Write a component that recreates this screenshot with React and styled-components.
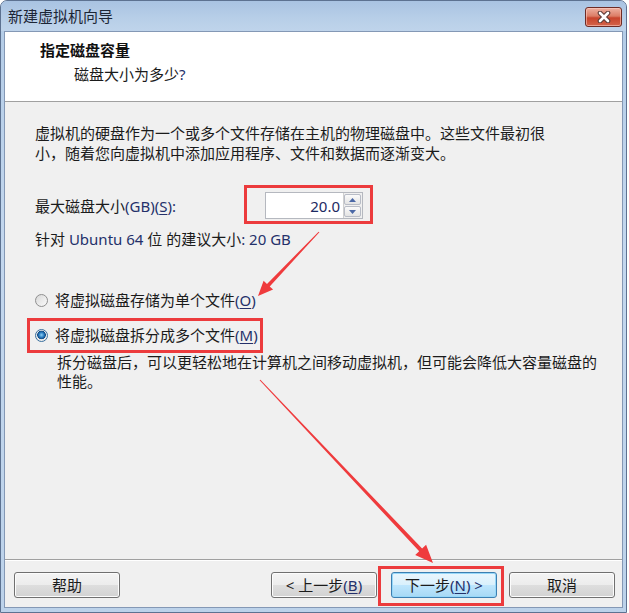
import React from 'react';
import styled, { createGlobalStyle } from 'styled-components';

const FONT = `"Noto Sans", "Noto Sans CJK SC", sans-serif`;

const Global = createGlobalStyle`
  html, body { margin: 0; padding: 0; background: #ffffff; }
  body { font-family: ${FONT}; }
`;

const Window = styled.div`
  position: relative;
  width: 627px;
  height: 613px;
  box-sizing: border-box;
  border: 1px solid #5d7291;
  border-radius: 7px 7px 0 0;
  background: linear-gradient(#b2cbe6, #c3d7ee 40%, #bcd2ea);
  display: flex;
  flex-direction: column;
  overflow: hidden;
  font-family: ${FONT};
`;

const TitleBar = styled.div`
  height: 30px;
  flex: none;
  display: flex;
  align-items: flex-start;
  padding: 0 4px 0 7px;
  background: linear-gradient(#a9c3e2, #b8cfe8 60%, #bfd4eb);
`;

const Title = styled.div`
  flex: 1;
  font-size: 15px;
  line-height: 30px;
  color: #1c2636;
`;

const CloseButton = styled.div`
  margin-top: 6px;
  width: 37px;
  height: 20px;
  box-sizing: border-box;
  border: 1px solid #6e2c26;
  border-radius: 3px;
  background: linear-gradient(#eeb0a0 0%, #dc7d66 45%, #c8442c 55%, #d4644a 100%);
  box-shadow: inset 0 0 0 1px rgba(255, 210, 200, 0.55);
  display: flex;
  align-items: center;
  justify-content: center;
`;

const Client = styled.div`
  flex: 1;
  margin: 0 3px 4px;
  border: 1px solid #8498b5;
  background: #f0f0f0;
  display: flex;
  flex-direction: column;
  min-height: 0;
`;

const Header = styled.div`
  height: 70px;
  flex: none;
  box-sizing: border-box;
  background: #ffffff;
  border-bottom: 1px solid #a0a0a0;
  padding: 8px 0 0 35px;
`;

const HeaderTitle = styled.div`
  font-size: 15px;
  line-height: 20px;
  font-weight: 700;
  color: #111;
`;

const HeaderSub = styled.div`
  margin: 4px 0 0 34px;
  font-size: 15px;
  line-height: 20px;
  color: #1b1b1b;
`;

const Body = styled.div`
  flex: 1;
  padding: 21px 20px 0 30px;
  display: flex;
  flex-direction: column;
  color: #1b1b1b;
  font-size: 15px;
  line-height: 20px;
`;

const Paragraph = styled.div`
  margin: 0;
`;

const Latin = styled.span`
  color: #24306a;
`;

const U = styled.span`
  text-decoration: underline;
  text-underline-offset: 2px;
`;

const SizeRow = styled.div`
  margin-top: 29px;
  display: flex;
  align-items: center;
`;

const SizeLabel = styled.div`
  width: 230px;
`;

const Highlight = styled.div`
  position: relative;
  display: inline-flex;
  align-self: ${(p) => p.$self || 'auto'};
  margin-left: ${(p) => p.$ml || 0}px;
  margin-top: ${(p) => p.$mt || 0}px;
  &::after {
    content: '';
    position: absolute;
    top: ${(p) => p.$t}px;
    right: ${(p) => p.$r}px;
    bottom: ${(p) => p.$b}px;
    left: ${(p) => p.$l}px;
    border: 3px solid #ec3b3d;
    pointer-events: none;
  }
`;

const Spin = styled.div`
  display: flex;
  width: 98px;
  height: 27px;
  box-sizing: border-box;
  border: 1px solid #b5b8bf;
  background: #ffffff;
`;

const SpinValue = styled.div`
  flex: 1;
  display: flex;
  align-items: center;
  justify-content: flex-end;
  padding-right: 3px;
  font-size: 15px;
  color: #1c2a62;
`;

const SpinButtons = styled.div`
  width: 19px;
  display: flex;
  flex-direction: column;
  gap: 1px;
  padding: 1px 1px 1px 0;
  box-sizing: border-box;
  background: #f0f0f0;
  border-left: 1px solid #d0d0d0;
`;

const SpinBtn = styled.div`
  flex: 1;
  border: 1px solid #b8bcc6;
  border-radius: 2px;
  background: linear-gradient(#fafafa, #e4e4e4);
  display: flex;
  align-items: center;
  justify-content: center;
`;

const Hint = styled.div`
  margin-top: 10px;
`;

const RadioRow = styled.div`
  display: flex;
  align-items: center;
  height: 20px;
  margin-top: ${(p) => p.$mt}px;
`;

const RadioCircle = styled.span`
  width: 13px;
  height: 13px;
  box-sizing: border-box;
  border-radius: 50%;
  border: 1px solid ${(p) => (p.$on ? '#3a6f9e' : '#8f8f8f')};
  background: ${(p) =>
    p.$on
      ? 'radial-gradient(circle at 50% 45%, #8fd0f5 0, #2a7cc0 2.5px, #114a85 4px, #e8e8e8 4.6px, #f6f6f6 100%)'
      : 'linear-gradient(135deg, #d8d8d8, #fbfbfb)'};
  margin-right: 7px;
  flex: none;
`;

const Description = styled.div`
  margin: 8px 0 0 22px;
  line-height: 19px;
`;

const Footer = styled.div`
  flex: none;
  height: 48px;
  box-sizing: border-box;
  border-top: 1px solid #a0a0a0;
  box-shadow: inset 0 1px 0 #ffffff;
  padding: 12px 7px 0 9px;
  display: flex;
  align-items: flex-start;
`;

const ButtonGroup = styled.div`
  margin-left: auto;
  display: flex;
  gap: 12px;
`;

const Button = styled.div`
  width: 106px;
  height: 26px;
  box-sizing: border-box;
  border: 1px solid ${(p) => (p.$default ? '#3c7fb1' : '#707070')};
  border-radius: 3px;
  background: ${(p) =>
    p.$default
      ? 'linear-gradient(#eaf6fd 0%, #d9f0fc 50%, #bee6fd 50%, #a7d9f5 100%)'
      : 'linear-gradient(#f4f4f4 0%, #ececec 50%, #dedede 50%, #d2d2d2 100%)'};
  box-shadow: inset 0 0 0 1px ${(p) => (p.$default ? '#97d8f9' : '#fcfcfc')};
  font-size: 15px;
  line-height: 24px;
  text-align: center;
  color: #1b1b1b;
`;

const Overlay = styled.svg`
  position: absolute;
  left: 0;
  top: 0;
  pointer-events: none;
`;

function arrow(tx, ty, px, py, L, W, w0, w1) {
  const dx = px - tx;
  const dy = py - ty;
  const len = Math.hypot(dx, dy);
  const ux = dx / len;
  const uy = dy / len;
  const nx = -uy;
  const ny = ux;
  const bx = px - ux * L;
  const by = py - uy * L;
  const pts = [
    [tx + nx * w0, ty + ny * w0],
    [bx + nx * w1, by + ny * w1],
    [bx + nx * W, by + ny * W],
    [px, py],
    [bx - nx * W, by - ny * W],
    [bx - nx * w1, by - ny * w1],
    [tx - nx * w0, ty - ny * w0],
  ];
  return pts.map((p) => p.map((v) => v.toFixed(1)).join(',')).join(' ');
}

const Up = () => (
  <svg width="7" height="4" viewBox="0 0 7 4">
    <path d="M0 4 L3.5 0 L7 4 Z" fill="#4b68a6" />
  </svg>
);
const Down = () => (
  <svg width="7" height="4" viewBox="0 0 7 4">
    <path d="M0 0 L3.5 4 L7 0 Z" fill="#4b68a6" />
  </svg>
);

export default function App() {
  return (
    <>
      <Global />
      <Window>
        <TitleBar>
          <Title>新建虚拟机向导</Title>
          <CloseButton>
            <svg width="14" height="12" viewBox="0 0 14 12">
              <path d="M3 2 L11 10 M11 2 L3 10" stroke="#5a3a36" strokeWidth="4.6" strokeLinecap="round" />
              <path d="M3 2 L11 10 M11 2 L3 10" stroke="#ffffff" strokeWidth="2.6" strokeLinecap="round" />
            </svg>
          </CloseButton>
        </TitleBar>
        <Client>
          <Header>
            <HeaderTitle>指定磁盘容量</HeaderTitle>
            <HeaderSub>
              磁盘大小为多少<Latin>?</Latin>
            </HeaderSub>
          </Header>
          <Body>
            <Paragraph>
              虚拟机的硬盘作为一个或多个文件存储在主机的物理磁盘中。这些文件最初很
              <br />
              小，随着您向虚拟机中添加应用程序、文件和数据而逐渐变大。
            </Paragraph>
            <SizeRow>
              <SizeLabel>
                最大磁盘大小<Latin>(GB)(<U>S</U>):</Latin>
              </SizeLabel>
              <Highlight $t={-7} $r={-10} $b={-5} $l={-21}>
                <Spin>
                  <SpinValue>20.0</SpinValue>
                  <SpinButtons>
                    <SpinBtn>
                      <Up />
                    </SpinBtn>
                    <SpinBtn>
                      <Down />
                    </SpinBtn>
                  </SpinButtons>
                </Spin>
              </Highlight>
            </SizeRow>
            <Hint>
              针对 <Latin>Ubuntu 64</Latin> 位 的建议大小<Latin>: 20 GB</Latin>
            </Hint>
            <RadioRow $mt={41}>
              <RadioCircle />
              将虚拟磁盘存储为单个文件<Latin>(<U>O</U>)</Latin>
            </RadioRow>
            <Highlight $self="flex-start" $mt={15} $t={-7} $r={-5} $b={-8} $l={-8}>
              <RadioRow $mt={0}>
                <RadioCircle $on />
                将虚拟磁盘拆分成多个文件<Latin>(<U>M</U>)</Latin>
              </RadioRow>
            </Highlight>
            <Description>
              拆分磁盘后，可以更轻松地在计算机之间移动虚拟机，但可能会降低大容量磁盘的
              <br />
              性能。
            </Description>
          </Body>
          <Footer>
            <Button>帮助</Button>
            <ButtonGroup>
              <Button>
                &lt; 上一步<Latin>(<U>B</U>)</Latin>
              </Button>
              <Highlight $ml={2} $t={-6} $r={-7} $b={-8} $l={-13}>
                <Button $default>
                  下一步<Latin>(<U>N</U>) &gt;</Latin>
                </Button>
              </Highlight>
              <Button>取消</Button>
            </ButtonGroup>
          </Footer>
        </Client>
        <Overlay width="627" height="613" viewBox="0 0 627 613">
          <polygon points={arrow(318, 231, 257, 295, 15, 6.5, 0.5, 1.8)} fill="#ef3b3d" />
          <polygon points={arrow(259, 379, 432, 562, 18, 7.5, 0.5, 2)} fill="#ef3b3d" />
        </Overlay>
      </Window>
    </>
  );
}
